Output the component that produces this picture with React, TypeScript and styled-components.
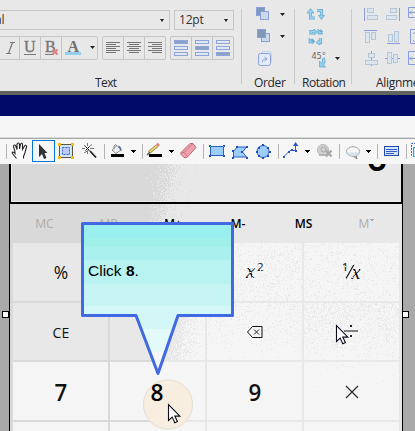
import React from "react";
import styled, { createGlobalStyle } from "styled-components";

const GlobalStyle = createGlobalStyle`
  * { box-sizing: border-box; }
  body { margin: 0; overflow: hidden; background: #f5f5f5; }
  svg { display: block; }
`;

const ui = `"Open Sans", "Noto Sans", sans-serif`;

const Page = styled.div`
  width: 415px;
  height: 431px;
  overflow: hidden;
  display: flex;
  flex-direction: column;
  font-family: ${ui};
`;

/* ---------- ribbon ---------- */
const Ribbon = styled.div`
  height: 95px;
  flex: none;
  display: flex;
  background: #e8e8e8;
  border-bottom: 4px solid #60645f;
`;
const Panel = styled.section<{ $w: number }>`
  width: ${(p) => p.$w}px;
  flex: none;
  display: flex;
  flex-direction: column;
`;
const Divider = styled.div`
  width: 1px;
  height: 75px;
  margin-top: 9px;
  flex: none;
  background: #cacaca;
`;
const PanelLabel = styled.div<{ $left: number; $ls?: number }>`
  padding-left: ${(p) => p.$left}px;
  height: 16px;
  line-height: 16px;
  font-size: 12px;
  letter-spacing: ${(p) => p.$ls ?? 0}px;
  color: #262626;
  white-space: nowrap;
`;
const PanelBody = styled.div`
  height: 75px;
  flex: none;
`;
const FieldRow = styled.div`
  display: flex;
  gap: 4px;
  padding-top: 10px;
`;
const Field = styled.div<{ $w: number; $open?: boolean }>`
  width: ${(p) => p.$w}px;
  height: 20px;
  display: flex;
  align-items: center;
  justify-content: space-between;
  padding: 0 5px 0 ${(p) => (p.$open ? 0 : 4)}px;
  border: 1px solid #c6c6c6;
  border-left-width: ${(p) => (p.$open ? 0 : 1)}px;
  font-size: 12px;
  letter-spacing: -0.2px;
  line-height: 18px;
  color: #333;
`;
const Cropped = styled.span`
  margin-left: -5px;
`;
const Caret = styled.i`
  width: 0;
  height: 0;
  border: 2.5px solid transparent;
  border-top: 3px solid #222;
  border-bottom: 0;
`;
const ButtonRow = styled.div`
  display: flex;
  gap: 4px;
  padding-top: 6px;
`;
const ButtonGroup = styled.div<{ $open?: boolean }>`
  height: 24px;
  display: flex;
  border: 1px solid #c6c6c6;
  border-left-width: ${(p) => (p.$open ? 0 : 1)}px;
  border-radius: ${(p) => (p.$open ? "0 2px 2px 0" : "2px")};
`;
const RibbonButton = styled.div<{ $w: number }>`
  width: ${(p) => p.$w}px;
  display: flex;
  align-items: center;
  justify-content: center;
  & + & { border-left: 1px solid #c6c6c6; }
`;

const Lines = ({ rows }: { rows: [number, number][] }) => (
  <svg width="16" height="13" shapeRendering="crispEdges">
    {rows.map(([x, w], i) => (
      <rect key={i} x={x} y={i * 2} width={w} height="1" fill="#747474" />
    ))}
  </svg>
);
const leftRows: [number, number][] = [[1, 14], [1, 10], [1, 14], [1, 10], [1, 14], [1, 10]];
const midRows: [number, number][] = [[1, 14], [3, 10], [1, 14], [3, 10], [1, 14], [3, 10]];
const rightRows: [number, number][] = [[1, 14], [5, 10], [1, 14], [5, 10], [1, 14], [5, 10]];

const Bars = ({ on }: { on: number }) => (
  <svg width="14" height="16">
    {[0, 1, 2].map((i) => (
      <rect key={i} x="0.5" y={i * 6 + 0.5} width="13" height="3"
        fill={i === on ? "#8ba3c4" : "#dfe8f2"} stroke="#8fa4dd" />
    ))}
  </svg>
);

/* ---------- bars under the ribbon ---------- */
const TitleStrip = styled.div`
  height: 21px;
  flex: none;
  background: #000a68;
`;
const MenuStrip = styled.div`
  height: 23px;
  flex: none;
  background: #f6f6f6;
  border-bottom: 1px solid #a5a8a5;
  box-shadow: inset 0 -1px #d8dbd8;
`;
const Toolbar = styled.div`
  height: 25px;
  flex: none;
  display: flex;
  background: #f6f6f6;
`;

type ToolProps = { x: number; w: number; children: React.ReactNode };
const Tool = ({ x, w, children }: ToolProps) => (
  <svg width={w} height="25" viewBox={`${x} 139 ${w} 25`}>
    {children}
  </svg>
);
const ToolSep = ({ x }: { x: number }) => (
  <rect x={x} y="144" width="1" height="15" fill="#b3b3b3" />
);
const Drop = ({ x }: { x: number }) => <path d={`M${x} 150h5v1h-1v1h-1v1h-1v-1h-1v-1h-1z`} fill="#000" />;
const Nodes = ({ pts, c }: { pts: [number, number][]; c: string }) => (
  <>
    {pts.map(([x, y], i) => (
      <rect key={i} x={x} y={y} width="2" height="2" fill={c} />
    ))}
  </>
);

/* ---------- workspace ---------- */
const Workspace = styled.main`
  flex: 1;
  position: relative;
  display: flex;
  background: #a9a9a9;
  padding-left: 9px;
`;
const Calculator = styled.div`
  width: 394px;
  height: 267px;
  display: flex;
  flex-direction: column;
  background: linear-gradient(90deg, #d9d9d9 0 156px, #e8e8e8 156px);
`;
const Display = styled.div`
  height: 40px;
  flex: none;
  overflow: hidden;
  border: 2px solid #000;
  border-top: 0;
  display: flex;
  justify-content: flex-end;
  padding-right: 13px;
  box-shadow: inset 1px -1px #ececec;
`;
const Readout = styled.span`
  font-size: 38px;
  line-height: 40px;
  font-weight: 600;
  margin-top: -28px;
  color: #000;
`;
const Body = styled.div`
  flex: 1;
  border: solid #000;
  border-width: 0 1px;
  padding: 0 3px;
`;
const MemoryRow = styled.div`
  height: 39px;
  display: grid;
  grid-template-columns: 63px 65px 64px 66px 65px 62px;
  align-items: center;
`;
const Memory = styled.span<{ $off?: boolean }>`
  text-align: center;
  font-size: 12px;
  line-height: 14px;
  font-weight: ${(p) => (p.$off ? 400 : 600)};
  color: ${(p) => (p.$off ? "#adadad" : "#000")};
`;
const Chevron = styled.svg`
  display: inline-block;
  vertical-align: 6px;
`;
const Keys = styled.div`
  display: grid;
  grid-template-columns: repeat(4, 95px);
  grid-template-rows: 58px 57px 58px 9px;
  gap: 2px;
`;
const Key = styled.div<{ $tone?: string; $size?: number; $weight?: number; $serif?: boolean; $drop?: number }>`
  display: flex;
  align-items: center;
  justify-content: center;
  overflow: hidden;
  padding-top: ${(p) => p.$drop ?? 0}px;
  background: ${(p) => p.$tone ?? "#f5f5f5"};
  color: #111;
  font-family: ${(p) => (p.$serif ? `"Liberation Serif", serif` : ui)};
  font-style: ${(p) => (p.$serif ? "italic" : "normal")};
  font-size: ${(p) => p.$size ?? 24}px;
  font-weight: ${(p) => p.$weight ?? 600};
  line-height: 30px;
`;
const Narrow = styled.span<{ $k: number }>`
  display: inline-block;
  transform: scaleX(${(p) => p.$k});
`;
const Overlay = styled.svg`
  position: absolute;
  left: 0;
  top: 0;
  pointer-events: none;
`;
const CalloutText = styled.p`
  position: absolute;
  left: 88px;
  top: 98px;
  margin: 0;
  font: 15.5px/18px "Liberation Sans", sans-serif;
  color: #000;
`;

/* Dithered speckle over the calculator surface, one path per tone. */
function speckle() {
  let seed = 7;
  const rnd = () => {
    seed = (seed * 1664525 + 1013904223) >>> 0;
    return seed / 4294967296;
  };
  const out = { dark: "", light: "", mid: "" };
  const put = (k: keyof typeof out, x: number, y: number) => {
    out[k] += `M${x} ${y}h1v1h-1z`;
  };
  for (let y = 164; y < 222; y++) {
    const edge = 171 - (y - 164) * 0.2;
    for (let x = 146; x < 208; x++) {
      if ((y > 201 && y < 204) || (y > 217 && x > 164)) continue;
      const p = 1 / (1 + Math.exp(-(x - edge) / 5));
      const r = rnd();
      if (x < 165 && r < p) put("light", x, y);
      if (x >= 165 && r > p) put("dark", x, y);
    }
  }
  for (let y = 243; y < 301; y++)
    for (let x = 235; x < 399; x++) {
      if (x >= 302 && x < 304) continue;
      if (rnd() < (x < 302 ? 0.14 : 0.1)) put("mid", x, y);
    }
  for (let y = 303; y < 360; y++)
    for (let x = 110; x < 399; x++) {
      if ((x >= 205 && x < 207) || (x >= 302 && x < 304)) continue;
      let p: number;
      if (x < 205) p = 1 / (1 + Math.exp((x - 188 + (y - 318) * 0.25) / 6));
      else if (x < 302) p = 0.16 * Math.max(0.08, 1 - (y - 300) / 60);
      else p = 0.32 * Math.max(0.08, 1 - (y - 300) / 65);
      if (rnd() < p) put("mid", x, y);
    }
  for (let y = 362; y < 392; y++)
    for (let x = 304; x < 399; x++) if (rnd() < 0.022 * (1 - (y - 362) / 34)) put("mid", x, y);
  return out;
}
const grain = speckle();

const Pointer = ({ x, y }: { x: number; y: number }) => (
  <path transform={`translate(${x} ${y})`}
    d="M.5 .5v16l3.700-3.400 2.600 5.600 2.600-1.200-2.600-5.400h5.100z" fill="#fff" stroke="#0b0b1c" strokeWidth="1.100" />
);

const OrderIcons = () => (
  <svg width="52" height="75" viewBox="242 0 52 75">
    <g stroke="#8a9fda">
      <rect x="256.500" y="7.500" width="8" height="8" fill="#8099b8" />
      <rect x="260.500" y="11.500" width="8" height="8" fill="#c9d9ea" />
      <rect x="261.500" y="33.500" width="8" height="8" fill="#c9d9ea" />
      <rect x="257.500" y="29.500" width="8" height="8" fill="#8099b8" />
      <rect x="261.500" y="51.500" width="10" height="11" rx="2" fill="#dce8f3" stroke="#c3d5ea" />
      <rect x="258.500" y="53.500" width="12" height="12" rx="2" fill="#e1ebf5" />
      <path d="M262.500 62c0-3 2-3 4-3m-2-2l2.500 2-2.500 2" fill="none" />
    </g>
    <path d="M280 13h5l-2.500 3zM280 35h5l-2.500 3z" fill="#222" />
  </svg>
);
const RotationIcons = () => (
  <svg width="56" height="75" viewBox="295 0 56 75">
    <g fill="none" stroke="#70a9cc" strokeWidth="3.200">
      <path d="M315 18h-4.500v-6M317 10.500h4.500v5" />
      <path d="M311 35v-3.500h4M319 33l3-2.500M320.500 38v4.500h-3M311 39.500l3 3" />
      <path d="M323 58q2 4-1 7" />
    </g>
    <g fill="#8bd0f1" stroke="#70a9cc" strokeWidth=".8">
      <path d="M307 13h7l-3.500-4.500zM318.500 15.500h6l-3 4zM314 29v6l3.500-3zM318 29v5h5zM320 39.500v5.500l-4-2.500zM309 38v5h5z" />
      <path d="M319.500 61v6h6z" />
    </g>
    <g fill="none" stroke="#97d5f2" strokeWidth="1.600">
      <path d="M315 18h-4.500v-6M317 10.500h4.500v5M311 35v-3.500h4M320.500 38v4.500h-3M323 58q2 4-1 7" />
    </g>
    <text x="311.500" y="59" fontFamily="DejaVu Sans, sans-serif" fontSize="8" fill="#666">45°</text>
    <path d="M335 57h5l-2.500 3z" fill="#222" />
  </svg>
);
const AlignIcons = () => (
  <svg width="63" height="75" viewBox="352 0 63 75">
    <g fill="#dbe5ed" stroke="#b5c6d8">
      <rect x="367.500" y="8.500" width="6" height="4" />
      <rect x="367.500" y="15.500" width="10" height="4" />
      <rect x="390.500" y="8.500" width="6" height="4" />
      <rect x="386.500" y="15.500" width="10" height="4" />
      <rect x="365.500" y="32.500" width="4" height="10" />
      <rect x="371.500" y="32.500" width="4" height="7" />
      <rect x="388.500" y="34.500" width="4" height="7" />
      <rect x="394.500" y="31.500" width="4" height="10" />
      <rect x="368.500" y="53.500" width="6" height="4" />
      <rect x="365.500" y="60.500" width="12" height="4" />
      <rect x="387.500" y="52.500" width="4" height="11" />
      <rect x="393.500" y="54.500" width="4" height="8" />
    </g>
    <g fill="none" stroke="#899bdc">
      <path d="M364.500 8v13M399.500 8v13M364 30.500h13M387 43.500h13M371.500 51v2M371.500 58v2M371.500 65v1M385 58.500h2M392 58.500h1M398 58.500h2" />
      <path d="M416 7.500h-7.500v10h7.500M416 29.500h-5.500v14h5.500M416 51.500h-7.500v13h7.500" />
      <path d="M409 12.500h7m-4-2l-2 2 2 2M413 34l2-2M413 40l2 2M409 58.500h7m-4-2l-2 2 2 2" />
    </g>
  </svg>
);

export default function App() {
  return (
    <Page>
      <GlobalStyle />
      <Ribbon>
        <Panel $w={241}>
          <PanelBody>
            <FieldRow>
              <Field $w={170} $open><Cropped>al</Cropped><Caret /></Field>
              <Field $w={60}>12pt<Caret /></Field>
            </FieldRow>
            <ButtonRow>
              <ButtonGroup $open>
                <RibbonButton $w={19}>
                  <svg width="18" height="18">
                    <path d="M5 14.500h5M9 3.500h5M7.500 14.500L11.500 3.500" stroke="#777" strokeWidth="1.200" />
                  </svg>
                </RibbonButton>
                <RibbonButton $w={21}>
                  <svg width="18" height="18">
                    <text x="3" y="12.500" fontFamily="Liberation Serif, serif" fontSize="16" fill="#777" stroke="#777" strokeWidth=".4">U</text>
                    <path d="M3 15.500h12" stroke="#777" />
                  </svg>
                </RibbonButton>
                <RibbonButton $w={21}>
                  <svg width="18" height="18">
                    <text x="3" y="12.500" fontFamily="Liberation Serif, serif" fontSize="16" fill="#777" stroke="#777" strokeWidth=".4">B</text>
                    <path d="M3 15.500h8" stroke="#777" />
                    <path d="M10.500 10.500l5 5m0-5l-5 5" stroke="#d98585" strokeWidth="2.200" />
                  </svg>
                </RibbonButton>
                <RibbonButton $w={36}>
                  <svg width="34" height="18">
                    <rect x="2" y="13" width="16" height="3" fill="#91d0ee" />
                    <text x="4.500" y="13" fontFamily="Liberation Serif, serif" fontWeight="700" fontSize="16" fill="#707070">A</text>
                    <path d="M27 7h5l-2.500 3z" fill="#222" />
                  </svg>
                </RibbonButton>
              </ButtonGroup>
              <ButtonGroup>
                <RibbonButton $w={20}><Lines rows={leftRows} /></RibbonButton>
                <RibbonButton $w={21}><Lines rows={midRows} /></RibbonButton>
                <RibbonButton $w={21}><Lines rows={rightRows} /></RibbonButton>
              </ButtonGroup>
              <ButtonGroup>
                <RibbonButton $w={20}><Bars on={0} /></RibbonButton>
                <RibbonButton $w={21}><Bars on={1} /></RibbonButton>
                <RibbonButton $w={21}><Bars on={2} /></RibbonButton>
              </ButtonGroup>
            </ButtonRow>
          </PanelBody>
          <PanelLabel $left={95} $ls={-0.6}>Text</PanelLabel>
        </Panel>
        <Divider />
        <Panel $w={52}>
          <PanelBody><OrderIcons /></PanelBody>
          <PanelLabel $left={12} $ls={-0.35}>Order</PanelLabel>
        </Panel>
        <Divider />
        <Panel $w={56}>
          <PanelBody><RotationIcons /></PanelBody>
          <PanelLabel $left={7} $ls={-0.5}>Rotation</PanelLabel>
        </Panel>
        <Divider />
        <Panel $w={63}>
          <PanelBody><AlignIcons /></PanelBody>
          <PanelLabel $left={24} $ls={-0.3}>Alignment</PanelLabel>
        </Panel>
      </Ribbon>
      <TitleStrip />
      <MenuStrip />
      <Toolbar>
        <Tool x={0} w={31}>
          <ToolSep x={6} />
          <path d="M16.500 158.500l-4-5c-1-2 1-2 2.500 0v-2l-1.500-5c0-2 2-2 2.500 0l1 3v-5c.5-2 2-2 2.500 0v4.500l1-4.500c.5-2 2-1.500 2 0v5l2-3.500c1-1.500 2.500-.5 2 1l-1.500 5.500-1.500 4v2"
            fill="#fff" stroke="#222" strokeWidth="1.100" />
        </Tool>
        <Tool x={31} w={25}>
          <rect x="32.500" y="140.500" width="22" height="21" fill="none" stroke="#0078d7" />
          <path d="M39 144v13l3-3 2 5 2.500-1-2-5h3z" fill="#333" />
        </Tool>
        <Tool x={56} w={22}>
          <rect x="59.500" y="144.500" width="13" height="13" fill="#cfe8f0" stroke="#555" />
          <rect x="62.500" y="147.500" width="7" height="7" fill="#bccbff" stroke="#3b5fd0" strokeDasharray="2 1" />
          <path d="M58 143h3v3h-3zM71 143h3v3h-3zM58 156h3v3h-3zM71 156h3v3h-3z" fill="#fdb813" />
        </Tool>
        <Tool x={78} w={28}>
          <path d="M87.500 143v3m0 5v3M82 148.500h3m5 0h4M84 145l2 2m3 3l-5 3m6-7l2-1.500" stroke="#777" />
          <path d="M85.500 146.500l4 4m0-4l-4 4" stroke="#111" />
          <path d="M90 151l6 6.500" stroke="#222" strokeWidth="1.800" />
          <ToolSep x={104} />
        </Tool>
        <Tool x={106} w={37}>
          <path d="M112 150l5-4.500 4 4.500-5 3.500z" fill="#eee" stroke="#888" />
          <path d="M114 149v-3q2-3 3 0" fill="none" stroke="#888" />
          <path d="M118 145.500q4 1 3.500 6l-2-3z" fill="#416ca9" />
          <rect x="111" y="154" width="13" height="3" fill="#000" />
          <Drop x={131} />
          <ToolSep x={142} />
        </Tool>
        <Tool x={143} w={61}>
          <rect x="149" y="154" width="13" height="3" fill="#000" />
          <path d="M149 152.500l8.500-7" stroke="#827b42" strokeWidth="3" />
          <path d="M149 152.500l8.500-7" stroke="#ebd56d" strokeWidth="1.800" />
          <path d="M147 155l3-3" stroke="#635d4c" strokeWidth="1.500" />
          <path d="M157 145.500l2-1.500" stroke="#e67c89" strokeWidth="3" />
          <Drop x={169} />
          <path d="M181 152.500l9-9h3l3 4-9 10h-3l-3-3z" fill="#f0a1ae" stroke="#bd6877" />
          <path d="M181 152.500h3l3 3.500m-3-3.500l9-9" fill="none" stroke="#ce7584" />
          <ToolSep x={203} />
        </Tool>
        <Tool x={204} w={75}>
          <rect x="210.500" y="146.500" width="13" height="9" fill="#9ccdfc" stroke="#285fc4" />
          <Nodes pts={[[209, 145], [223, 145], [209, 155], [223, 155]]} c="#244fb0" />
          <rect x="210" y="146" width="1" height="1" fill="#20c060" />
          <rect x="223" y="146" width="1" height="1" fill="#20c060" />
          <path d="M233.500 157v-6l4-4h9l-4 5 4 5z" fill="#9ccdfc" stroke="#285fc4" />
          <Nodes pts={[[232, 150], [236, 146], [246, 146], [232, 157], [246, 157], [241, 151]]} c="#244fb0" />
          <circle cx="263" cy="151.500" r="6" fill="#9ccdfc" stroke="#285fc4" />
          <Nodes pts={[[262, 144], [256, 151], [269, 151], [262, 157], [258, 147], [267, 147], [258, 155], [267, 155]]} c="#244fb0" />
          <ToolSep x={278} />
        </Tool>
        <Tool x={279} w={61}>
          <path d="M284 156.500l6-6h5.500v-5" fill="none" stroke="#315ac4" />
          <path d="M293 146l2.500-4 3 4z" fill="#2b55c0" />
          <Nodes pts={[[283, 156], [288, 151], [291, 149], [295, 150]]} c="#2b55c0" />
          <Drop x={305} />
          <circle cx="323" cy="150" r="5.500" fill="#d0d0d0" stroke="#b9b9b9" />
          <circle cx="323.500" cy="149.500" r="2.500" fill="none" stroke="#aaa" />
          <path d="M319 155h8" stroke="#b4b4b4" strokeWidth="2" />
          <path d="M326 150.500l5.500 6m0-6l-5.500 6" stroke="#aaa" strokeWidth="2.400" />
          <ToolSep x={339} />
        </Tool>
        <Tool x={340} w={38}>
          <path d="M353 156l4 3-1-4" fill="#aac6d6" stroke="#888" />
          <ellipse cx="353" cy="151.500" rx="6.500" ry="4.800" fill="#f7f7f7" stroke="#a4a4a4" />
          <path d="M347.500 152.500h11q-1 3.500-5.500 3.500t-5.500-3.500z" fill="#d5e3ec" />
          <Drop x={366} />
          <ToolSep x={377} />
        </Tool>
        <Tool x={378} w={37}>
          <rect x="384.500" y="146.500" width="14" height="9" fill="#d7e5fb" stroke="#2347b7" />
          <path d="M386 149.500h11M386 151.500h11M386 153.500h8" stroke="#3159c7" />
          <ToolSep x={406} />
          <path d="M416 143.500h-4.500v12h4.500" fill="none" stroke="#2d61c6" strokeDasharray="2 1" />
          <rect x="413.500" y="147.500" width="5" height="9" fill="#b9f1ff" stroke="#18afe5" />
        </Tool>
      </Toolbar>
      <Workspace>
        <Calculator>
          <Display><Readout>0</Readout></Display>
          <Body>
            <MemoryRow>
              <Memory $off>MC</Memory>
              <Memory $off>MR</Memory>
              <Memory>M+</Memory>
              <Memory>M-</Memory>
              <Memory>MS</Memory>
              <Memory $off>
                M<Chevron width="6" height="3"><path d="M1 .5h4M2 1.500h2" stroke="#adadad" /></Chevron>
              </Memory>
            </MemoryRow>
            <Keys>
              <Key $tone="#e8e8e8" $size={19} $weight={400}><Narrow $k={0.92}>%</Narrow></Key>
              <Key $tone="#e8e8e8" />
              <Key $size={20} $weight={400} $serif>
                <svg width="20" height="22">
                  <text x="1" y="17" fontSize="20" fill="#111">x</text>
                  <text x="12" y="10" fontFamily="Open Sans, sans-serif" fontStyle="normal" fontSize="11.500" fill="#111">2</text>
                </svg>
              </Key>
              <Key $size={20} $weight={400} $serif>
                <svg width="20" height="22">
                  <text x="0" y="10" fontFamily="Open Sans, sans-serif" fontStyle="normal" fontSize="11" fill="#111" stroke="#111" strokeWidth=".2">1</text>
                  <path d="M4 17.500L12 3.500" stroke="#111" strokeWidth="1.200" />
                  <text x="9.500" y="17.500" fontSize="20" fill="#111">x</text>
                </svg>
              </Key>
              <Key $tone="#e8e8e8" $size={15} $weight={400}><Narrow $k={0.94}>CE</Narrow></Key>
              <Key />
              <Key />
              <Key />
              <Key $drop={2}><Narrow $k={0.93}>7</Narrow></Key>
              <Key />
              <Key $drop={2}><Narrow $k={0.93}>9</Narrow></Key>
              <Key $drop={1}>
                <svg width="14" height="14">
                  <path d="M1 1l12 12M13 1L1 13" stroke="#222" strokeWidth="1.100" />
                </svg>
              </Key>
              <Key /><Key /><Key /><Key />
            </Keys>
          </Body>
        </Calculator>
        <Overlay width="415" height="267" viewBox="0 164 415 267">
          <g shapeRendering="crispEdges">
            <path d={grain.dark} fill="#d9d9d9" />
            <path d={grain.light} fill="#e8e8e8" />
            <path d={grain.mid} fill="#e8e8e8" />
          </g>
          <path d="M247.500 332l5-5.500h9.500v11h-9.500z" fill="#f5f5f5" stroke="#111" />
          <path d="M254 329.500l5 5m0-5l-5 5" stroke="#222" />
          <path d="M344 330h14v2h-14z" fill="#808080" />
          <path d="M350 325h2v2h-2zM350 335h2v2h-2z" fill="#222" />
          <circle cx="168" cy="404.500" r="24.500" fill="#f8eedf" stroke="#e3ddd3" />
          <text x="150.500" y="401" textLength="13" lengthAdjust="spacingAndGlyphs" fontFamily="Open Sans, sans-serif" fontSize="24" fontWeight="600" fill="#000">8</text>
          <Pointer x={168} y={404} />
          <Pointer x={336} y={325} />
          <defs>
            <clipPath id="bubble">
              <path d="M82.500 223.500h150v92h-54.500l-20 58-22-58H82.500z" />
            </clipPath>
          </defs>
          <g clipPath="url(#bubble)" shapeRendering="crispEdges">
            <rect x="81" y="222" width="154" height="155" fill="#f5f7f8" />
            <rect x="81" y="222" width="154" height="130" fill="#e3fafa" />
            <rect x="81" y="222" width="154" height="107" fill="#d3f7f7" />
            <rect x="81" y="222" width="154" height="84" fill="#c6f4f3" />
            <rect x="81" y="222" width="154" height="62" fill="#b8f3f2" />
            <rect x="81" y="222" width="154" height="38" fill="#aaf0ee" />
            <rect x="81" y="222" width="154" height="25" fill="#a0f0ea" />
            <rect x="81" y="222" width="154" height="16" fill="#9aeeee" />
          </g>
          <path d="M82.500 223.500h150v92h-54.500l-20 58-22-58H82.500z" fill="none" stroke="#4169e1" strokeWidth="3" strokeLinejoin="round" />
          <g fill="#fff" stroke="#000">
            <rect x="2.500" y="311.500" width="6" height="6" />
            <rect x="402.500" y="311.500" width="6" height="6" />
          </g>
        </Overlay>
        <CalloutText>Click <b>8</b>.</CalloutText>
      </Workspace>
    </Page>
  );
}
